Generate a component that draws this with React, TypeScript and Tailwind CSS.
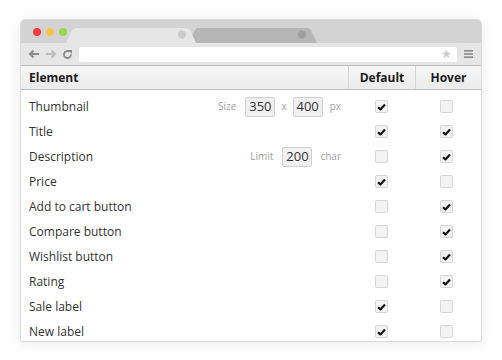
import clsx from 'clsx';

type Row = {
  name: string;
  def: boolean;
  hover: boolean;
  extra?: 'size' | 'limit';
};

const ROWS: Row[] = [
  { name: 'Thumbnail', def: true, hover: false, extra: 'size' },
  { name: 'Title', def: true, hover: true },
  { name: 'Description', def: false, hover: true, extra: 'limit' },
  { name: 'Price', def: true, hover: false },
  { name: 'Add to cart button', def: false, hover: true },
  { name: 'Compare button', def: false, hover: true },
  { name: 'Wishlist button', def: false, hover: true },
  { name: 'Rating', def: false, hover: true },
  { name: 'Sale label', def: true, hover: false },
  { name: 'New label', def: true, hover: false },
];

function Check({ on }: { on: boolean }) {
  return (
    <div className="flex h-[13px] w-[13px] items-center justify-center rounded-[2px] border border-[#d6d6d6] bg-[#f3f3f3]">
      {on && (
        <svg width="9" height="8" viewBox="0 0 9 8">
          <path d="M1 4.2 L3.4 6.4 L8 1.4" fill="none" stroke="#111" strokeWidth="2.2" strokeLinejoin="round" />
        </svg>
      )}
    </div>
  );
}

function NumBox({ value }: { value: string }) {
  return (
    <div className="flex h-[20px] w-[30px] items-center justify-center rounded-[2px] border border-[#cfcfcf] bg-[#f1f1f1] text-[13px] text-[#333]">
      {value}
    </div>
  );
}

function TitleBar() {
  return (
    <div className="relative h-[23px] bg-[#d3d3d3]">
      <div className="absolute left-[12px] top-[8px] flex gap-[5px]">
        <span className="h-[8px] w-[8px] rounded-full bg-[#f2393c]" />
        <span className="h-[8px] w-[8px] rounded-full bg-[#f6c83f]" />
        <span className="h-[8px] w-[8px] rounded-full bg-[#93d94a]" />
      </div>
      {/* inactive tab */}
      <svg className="absolute left-[168px] top-[8px]" width="132" height="15" viewBox="0 0 132 15">
        <path d="M0 15 L6 2 Q7 0 10 0 L118 0 Q121 0 122 2 L128 15 Z" fill="#b6b6b6" />
        <circle cx="113" cy="6.5" r="4" fill="#9f9f9f" />
      </svg>
      {/* active tab */}
      <svg className="absolute left-[45px] top-[8px]" width="134" height="15" viewBox="0 0 134 15">
        <path d="M0 15 L6 2 Q7 0 10 0 L120 0 Q123 0 124 2 L130 15 Z" fill="#e6e6e6" />
        <circle cx="116" cy="6.5" r="4" fill="#cbcbcb" />
      </svg>
    </div>
  );
}

function ToolBar() {
  return (
    <div className="flex h-[22px] items-center bg-[#e6e6e6] pl-[7px] pr-[7px]">
      <svg width="12" height="10" viewBox="0 0 12 10" className="mr-[5px]">
        <path d="M11 5 H2 M5.5 1.5 L2 5 L5.5 8.5" fill="none" stroke="#8a8a8a" strokeWidth="2" />
      </svg>
      <svg width="12" height="10" viewBox="0 0 12 10" className="mr-[5px]">
        <path d="M1 5 H10 M6.5 1.5 L10 5 L6.5 8.5" fill="none" stroke="#bdbdbd" strokeWidth="2" />
      </svg>
      <svg width="11" height="11" viewBox="0 0 11 11" className="mr-[6px]">
        <path d="M9 5.5 A3.5 3.5 0 1 1 7.6 2.7" fill="none" stroke="#8a8a8a" strokeWidth="1.8" />
        <path d="M6 1 L10 1 L10 5 Z" fill="#8a8a8a" />
      </svg>
      <div className="flex h-[15px] flex-1 items-center justify-end rounded-[2px] bg-white pr-[5px]">
        <span className="text-[12px] leading-none text-[#c9c9c9]">★</span>
      </div>
      <svg width="9" height="8" viewBox="0 0 9 8" className="ml-[7px] mr-[1px]">
        <rect y="0" width="9" height="1.6" fill="#8a8a8a" />
        <rect y="3.2" width="9" height="1.6" fill="#8a8a8a" />
        <rect y="6.4" width="9" height="1.6" fill="#8a8a8a" />
      </svg>
    </div>
  );
}

export default function App() {
  return (
    <div
      className="h-[360px] w-[502px] bg-white pl-[20px] pt-[19px]"
      style={{ fontFamily: '"Open Sans", "Liberation Sans", sans-serif' }}
    >
      <div className="h-[323px] w-[462px] overflow-hidden rounded-t-[5px] rounded-b-[2px] border border-[#dcdcdc] bg-white shadow-[0_2px_14px_rgba(0,0,0,0.08)]">
        <TitleBar />
        <ToolBar />
        <div className="grid h-[25px] grid-cols-[327px_67px_1fr] border-y border-[#bdbdbd] bg-gradient-to-b from-[#f8f8f8] to-[#ebebeb] text-[12px] font-bold text-[#1c1c1c]">
          <div className="flex items-center pl-[8px]">Element</div>
          <div className="flex items-center justify-center border-l border-[#d4d4d4]">Default</div>
          <div className="flex items-center justify-center border-l border-[#d4d4d4]">Hover</div>
        </div>
        <div className="pt-[4px]">
          {ROWS.map((r) => (
            <div key={r.name} className="grid h-[25px] grid-cols-[327px_67px_1fr] items-center text-[12px] text-[#333]">
              <div className="flex items-center justify-between pl-[8px] pr-[7px]">
                <span>{r.name}</span>
                {r.extra === 'size' && (
                  <div className="flex items-center text-[10px] text-[#a0a0a0]">
                    <span className="mr-[9px]">Size</span>
                    <NumBox value="350" />
                    <span className="mx-[6px]">x</span>
                    <NumBox value="400" />
                    <span className={clsx('ml-[7px]')}>px</span>
                  </div>
                )}
                {r.extra === 'limit' && (
                  <div className="flex items-center text-[10px] text-[#a0a0a0]">
                    <span className="mr-[9px]">Limit</span>
                    <NumBox value="200" />
                    <span className="ml-[8px]">char</span>
                  </div>
                )}
              </div>
              <div className="flex justify-center">
                <Check on={r.def} />
              </div>
              <div className="flex justify-center pr-[3px]">
                <Check on={r.hover} />
              </div>
            </div>
          ))}
        </div>
      </div>
    </div>
  );
}
